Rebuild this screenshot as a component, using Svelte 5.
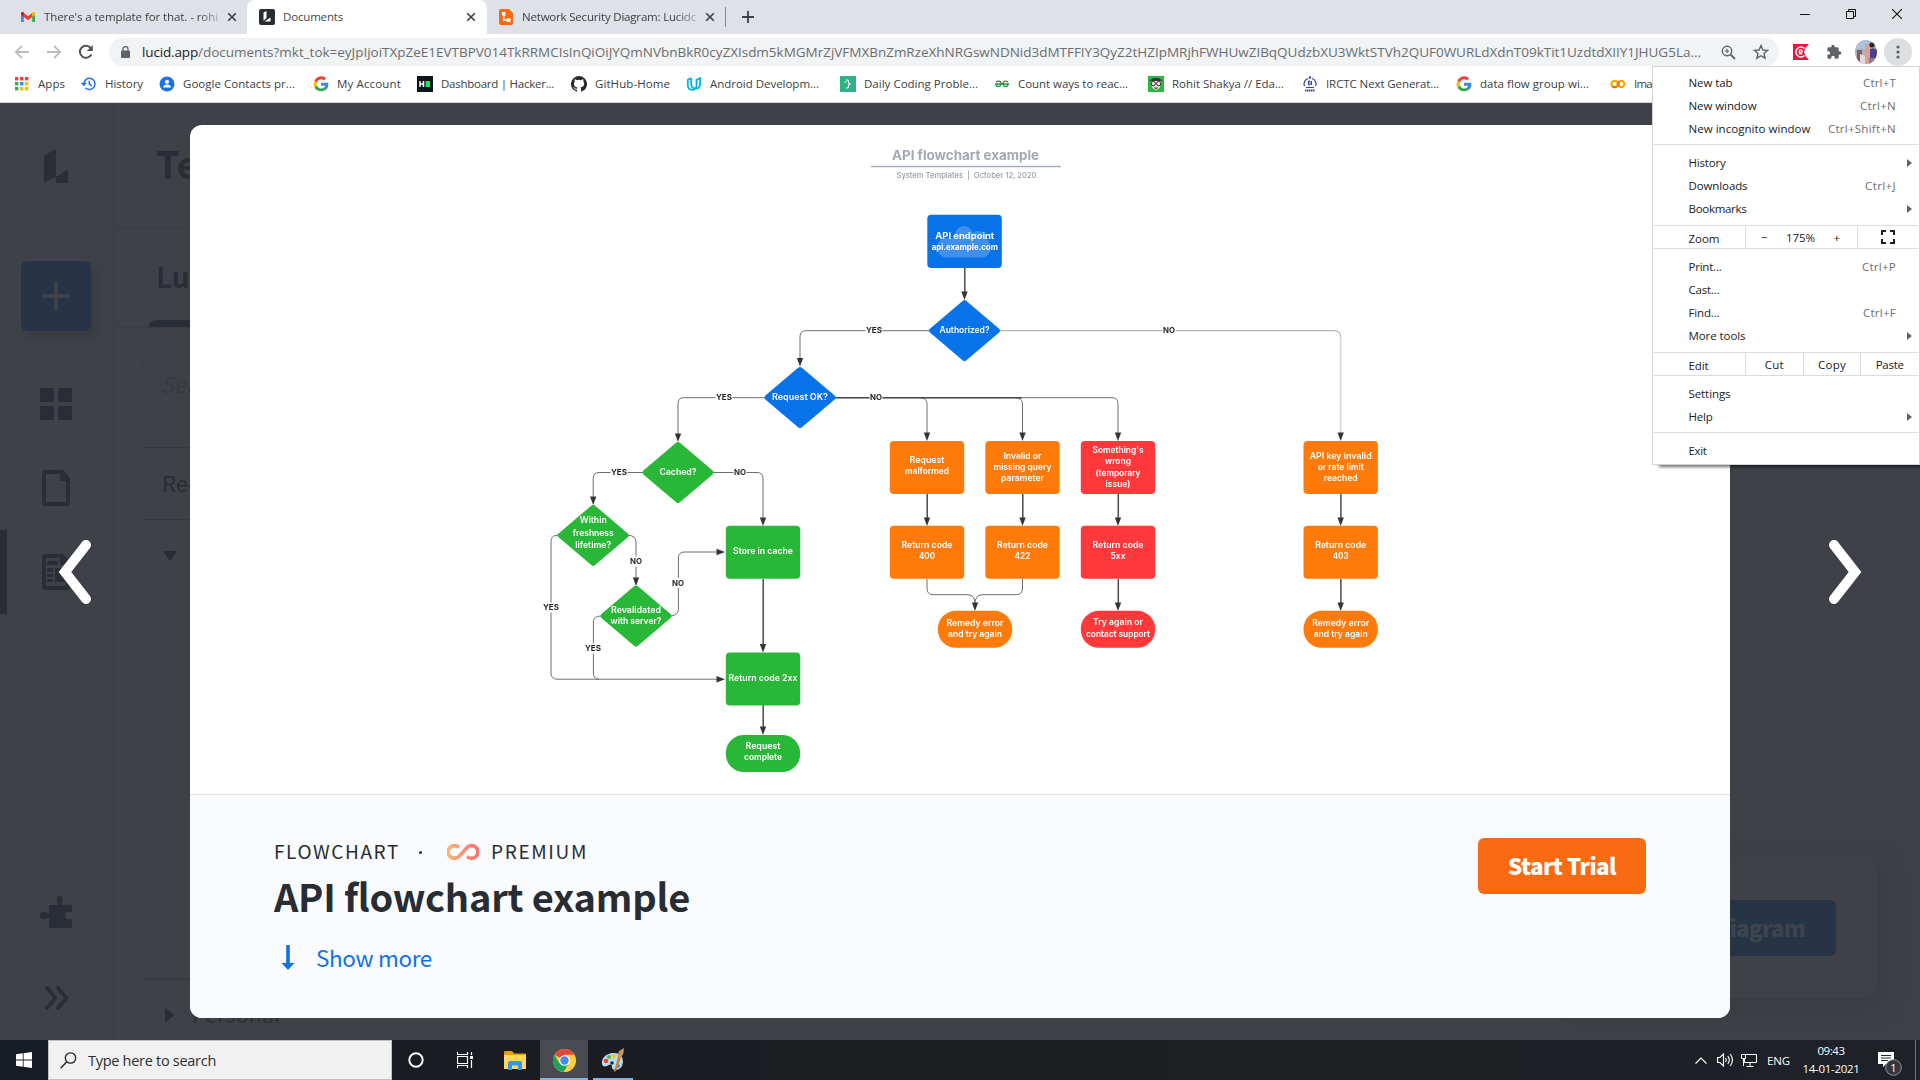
<script>
  // Tracks a text run out (or in) so that it spans the given width.
  function fit(node, width) {
    node.style.letterSpacing = '0px';
    const natural = node.getBoundingClientRect().width;
    const count = node.textContent.length;
    node.style.letterSpacing = `${(width - natural) / count}px`;
  }

  const bookmarks = [
    { icon: 'apps', label: 'Apps', w: 27 },
    { icon: 'history', label: 'History', w: 38 },
    { icon: 'contact', label: 'Google Contacts pr...', w: 112 },
    { icon: 'google', label: 'My Account', w: 64 },
    { icon: 'hacker', label: 'Dashboard | Hacker...', w: 113 },
    { icon: 'github', label: 'GitHub-Home', w: 75 },
    { icon: 'udacity', label: 'Android Developm...', w: 109 },
    { icon: 'daily', label: 'Daily Coding Proble...', w: 114 },
    { icon: 'gfg', label: 'Count ways to reac...', w: 110 },
    { icon: 'face', label: 'Rohit Shakya // Eda...', w: 112 },
    { icon: 'irctc', label: 'IRCTC Next Generat...', w: 113 },
    { icon: 'google', label: 'data flow group wi...', w: 109 },
    { icon: 'colab', label: 'Ima', w: 18 }
  ];

  const BLUE = '#0872e8';
  const GREEN = '#29b737';
  const ORANGE = '#fd7a0b';
  const RED = '#ff393b';

  // Nodes of the flowchart: centre, shape, colour and [text, width, baseline] lines.
  const nodes = [
    { k: 'd', x: 964.5, y: 330.7, c: BLUE, t: [['Authorized?', 50, 333.2]] },
    { k: 'd', x: 800, y: 397.5, c: BLUE, t: [['Request OK?', 56, 400]] },
    { k: 'd', x: 678, y: 472.5, c: GREEN, t: [['Cached?', 37, 475]] },
    { k: 'd', x: 593.2, y: 535.3, c: GREEN, t: [['Within', 27, 523.3], ['freshness', 41, 535.5], ['lifetime?', 36, 547.7]] },
    { k: 'd', x: 636, y: 616, c: GREEN, t: [['Revalidated', 50, 612.5], ['with server?', 51, 623.5]] },
    { k: 'r', x: 763, y: 552.3, c: GREEN, t: [['Store in cache', 60, 554]] },
    { k: 'r', x: 763, y: 679, c: GREEN, t: [['Return code 2xx', 69, 681]] },
    { k: 'p', x: 763, y: 753.5, c: GREEN, t: [['Request', 35, 749], ['complete', 38, 760.3]] },
    { k: 'r', x: 927, y: 467.5, c: ORANGE, t: [['Request', 35, 463], ['malformed', 44, 474]] },
    { k: 'r', x: 1022.5, y: 467.5, c: ORANGE, t: [['Invalid or', 38, 458.7], ['missing query', 58, 470], ['parameter', 43, 481.3]] },
    { k: 'r', x: 1118, y: 467.5, c: RED, t: [["Something's", 51, 452.8], ['wrong', 26, 464.2], ['(temporary', 45, 475.5], ['issue)', 25, 486.7]] },
    { k: 'r', x: 1340.7, y: 467.5, c: ORANGE, t: [['API key invalid', 62, 458.7], ['or rate limit', 46, 470], ['reached', 34, 481.3]] },
    { k: 'r', x: 927, y: 552.3, c: ORANGE, t: [['Return code', 51, 548], ['400', 16, 559.3]] },
    { k: 'r', x: 1022.5, y: 552.3, c: ORANGE, t: [['Return code', 51, 548], ['422', 16, 559.3]] },
    { k: 'r', x: 1118, y: 552.3, c: RED, t: [['Return code', 51, 548], ['5xx', 15, 559.3]] },
    { k: 'r', x: 1340.7, y: 552.3, c: ORANGE, t: [['Return code', 51, 548], ['403', 16, 559.3]] },
    { k: 'p', x: 975, y: 629.3, c: ORANGE, t: [['Remedy error', 57, 626], ['and try again', 54, 637.3]] },
    { k: 'p', x: 1118, y: 629.3, c: RED, t: [['Try again or', 50, 625.3], ['contact support', 64, 636.5]] },
    { k: 'p', x: 1340.7, y: 629.3, c: ORANGE, t: [['Remedy error', 57, 626], ['and try again', 54, 637.3]] }
  ];

  const strong = ['M964.8 268V292', 'M763.2 579V645', 'M763.2 705V728', 'M927.2 494V519', 'M1022.8 494V519', 'M1118.3 494V519', 'M1340.9 494V519', 'M1118.3 579V604', 'M1340.9 579V604'];
  const thin = [
    'M929 330.7H806Q800 330.7 800 336.7V358',
    'M765 397.7H684Q678 397.7 678 403.7V435',
    'M643 472.5H599Q593.2 472.5 593.2 478.5V498',
    'M713 472.5H757Q763 472.5 763 478.5V519',
    'M558 535.3H556Q551 536 551 542V673Q551 679.2 557 679.2H718',
    'M628 535.3Q636 535.5 636 542V578',
    'M601 616Q593.4 616 593.4 622V673Q593.4 679.2 599 679.2',
    'M671 616Q678.4 615 678.4 609V558Q678.4 552 684.4 552H718',
    'M920 397.7Q927 398 927 404V434',
    'M1015 397.7Q1022.5 398 1022.5 404V434',
    'M835 397.7H1112Q1118 397.7 1118 403.7V434',
    'M927 579V588Q927 594.7 933 594.7H968Q975 595 975 604',
    'M1022.5 579V588Q1022.5 594.7 1016.5 594.7H982Q975 595 975 604'
  ];
  const heads = [
    [964.5, 300], [800, 366.5], [678, 442], [593.2, 505], [763, 526], [636, 586], [763, 652.5], [763, 735],
    [927, 441], [1022.5, 441], [1118, 441], [1340.7, 441], [927, 526], [1022.5, 526], [1118, 526], [1340.7, 526],
    [975, 611], [1118, 611], [1340.7, 611]
  ];
  const labels = [
    ['YES', 874, 330], ['NO', 1169, 330], ['YES', 724, 397], ['NO', 876, 397], ['YES', 619, 472], ['NO', 740, 472],
    ['NO', 636, 561.5], ['NO', 678, 583], ['YES', 551, 607.5], ['YES', 593, 648.5]
  ];
</script>

{#snippet google()}
  <svg width="16" height="16" viewBox="0 0 48 48">
    <path fill="#ea4335" d="M24 10c3.500 0 6.600 1.200 9 3.500l6.600-6.600A22 22 0 0 0 4.300 14l7.700 6A12.800 12.800 0 0 1 24 10z" />
    <path fill="#4285f4" d="M46 24.500c0-1.600-.2-3.200-.5-4.500H24v9h12.400a10.600 10.600 0 0 1-4.600 7l7.400 5.700C43.600 37.700 46 31.700 46 24.500z" />
    <path fill="#fbbc05" d="M12 28.500a13.400 13.400 0 0 1 0-8.600l-7.700-6a22 22 0 0 0 0 20.600z" />
    <path fill="#34a853" d="M24 46c6 0 11-2 14.900-5.400L31.800 35A13.400 13.400 0 0 1 12 28.500l-7.700 6A22 22 0 0 0 24 46z" />
  </svg>
{/snippet}

{#snippet bookmarkIcon(name)}
  {#if name === 'google'}
    {@render google()}
  {:else}
    <svg width="16" height="16" viewBox="0 0 16 16">
      {#if name === 'apps'}
        {#each [0, 1, 2, 3, 4, 5, 6, 7, 8] as i}
          <rect x={1 + (i % 3) * 5} y={1 + Math.floor(i / 3) * 5} width="3.400" height="3.400"
            fill={['#ea4335', '#ea4335', '#ea4335', '#34a853', '#4285f4', '#fbbc05', '#34a853', '#fbbc05', '#fbbc05'][i]} />
        {/each}
      {:else if name === 'history'}
        <path d="M2.800 8a5.600 5.600 0 1 1 1.700 4M.6 6.800L2.800 9.200 5.100 6.800M8.300 4.800V8.300L10.800 9.800" fill="none" stroke="#1a73e8" stroke-width="1.500" />
      {:else if name === 'contact'}
        <circle cx="8" cy="8" r="7.500" fill="#1a73e8" /><circle cx="8" cy="5.800" r="2.100" fill="#fff" /><path d="M4 11.500c0-4 8-4 8 0z" fill="#fff" />
      {:else if name === 'hacker'}
        <rect width="16" height="16" fill="#0e141e" /><path d="M3 5v6M6.500 5v6M3 8h4" stroke="#fff" stroke-width="1.500" /><rect x="8.500" y="5" width="4.500" height="6" fill="#05ed57" />
      {:else if name === 'github'}
        <path fill="#24292e" d="M8 0a8 8 0 0 0-2.530 15.590c.4.070.550-.170.550-.380v-1.490c-2.230.490-2.700-.950-2.700-.950-.360-.920-.890-1.170-.890-1.170-.730-.500.050-.490.050-.490.810.060 1.230.830 1.230.830.720 1.230 1.880.870 2.340.670.070-.520.280-.870.510-1.070-1.780-.2-3.640-.890-3.640-3.950 0-.870.310-1.590.820-2.150-.080-.2-.360-1.020.080-2.120 0 0 .670-.210 2.200.820a7.600 7.600 0 0 1 4 0c1.530-1.040 2.200-.820 2.200-.820.440 1.100.160 1.920.080 2.120.510.560.820 1.280.820 2.150 0 3.070-1.870 3.750-3.650 3.950.290.250.540.730.540 1.480v2.190c0 .210.150.460.550.380A8 8 0 0 0 8 0z" />
      {:else if name === 'udacity'}
        <path d="M5.200 2L1.800 3.800V9q0 4.800 4.500 4.800 4.300-.2 4.300-5V3.200M5.200 2V8q.1 4.500 4.600 4.600 4.300 0 4.300-4.800V2L10.600 3.800" fill="none" stroke="#02b3e4" stroke-width="1.800" stroke-linejoin="round" />
      {:else if name === 'daily'}
        <rect width="16" height="16" fill="#2fb282" /><path d="M6 4h1.500q1 0 1 1.500V7l1.500 1-1.500 1v1.500q0 1.500-1 1.500H6" fill="none" stroke="#fff" stroke-width="1.200" /><circle cx="5.500" cy="6" r=".8" fill="#fff" />
      {:else if name === 'gfg'}
        <path d="M1 8h14M2 5.800q4-2 5 1.200 0 3.500-2.700 3.500-2.300 0-2.300-2.500M14 5.800q-4-2-5 1.200 0 3.500 2.700 3.500 2.300 0 2.300-2.500" fill="none" stroke="#2f8d46" stroke-width="1.300" />
      {:else if name === 'face'}
        <rect width="16" height="16" fill="#29b744" /><path d="M2.500 6L5 3h6l2.500 3-2 6L8 14.500 4.500 12z" fill="#f4e9e2" /><path d="M1.500 6q1-4 6.500-4t6.500 4l-2-1H4z" fill="#333" /><circle cx="5.300" cy="7.600" r="2.100" fill="none" stroke="#222" /><circle cx="10.700" cy="7.600" r="2.100" fill="none" stroke="#222" /><path d="M5.500 11.500h5L8 13.500z" fill="#444" />
      {:else if name === 'irctc'}
        <path d="M6 2.500A5.500 5.500 0 0 0 2.500 10M10 2.500A5.500 5.500 0 0 1 13.500 10M4 11.500h8" fill="none" stroke="#33459b" stroke-width="1.200" /><circle cx="8" cy="1.500" r="1.200" fill="#33459b" /><path d="M6.500 5v4h1.500v-4zM9.500 5v4" stroke="#33459b" fill="none" /><path d="M3 14.500h10" stroke="#33459b" stroke-width="2" stroke-dasharray="1.500 .5" />
      {:else}
        <circle cx="4.600" cy="8" r="3.100" fill="none" stroke="#f9ab00" stroke-width="2.200" /><circle cx="11.300" cy="8" r="3.100" fill="none" stroke="#f9ab00" stroke-width="2.200" /><path d="M2.400 10.200a3.100 3.100 0 0 0 4.400 0M9.100 10.200a3.100 3.100 0 0 1 0-4.400" fill="none" stroke="#e8710a" stroke-width="2.200" />
      {/if}
    </svg>
  {/if}
{/snippet}

{#snippet closeIcon()}
  <svg class="close" width="10" height="10" viewBox="0 0 10 10"><path d="M1.200 1.200L8.800 8.800M8.800 1.200L1.200 8.800" stroke="#3c4043" stroke-width="1.600" /></svg>
{/snippet}

{#snippet menuRow(label, keys, width, keyWidth)}
  <div class="row">
    <span use:fit={width}>{label}</span>
    {#if keys === '>'}
      <svg class="sub" width="5" height="8" viewBox="0 0 5 8"><path d="M0 0L5 4 0 8z" fill="#5f6368" /></svg>
    {:else if keys}
      <span class="keys" use:fit={keyWidth}>{keys}</span>
    {/if}
  </div>
{/snippet}

<div class="screen">
  <header>
    <div class="tabs">
      <div class="tab first">
        <svg width="16" height="16" viewBox="0 0 16 16"><path d="M1 3.500V13h2.800V6z" fill="#4285f4" /><path d="M15 3.500V13h-2.800V6z" fill="#34a853" /><path d="M1 4.200V6l2.800 2V4z" fill="#c5221f" /><path d="M15 4.200V6l-2.800 2V4z" fill="#fbbc04" /><path d="M3.800 4L8 7.200 12.200 4v4L8 11.200 3.800 8z" fill="#ea4335" /><circle cx="2.500" cy="4.200" r="1.500" fill="#c5221f" /><circle cx="13.500" cy="4.200" r="1.500" fill="#fbbc04" /></svg>
        <div class="name faded"><span use:fit={174}>There's a template for that. - rohi</span></div>
        {@render closeIcon()}
      </div>
      <div class="tab active">
        <svg width="16" height="16" viewBox="0 0 16 16"><rect width="16" height="16" rx="2" fill="#282c33" /><path d="M4.500 3.500L7.500 2v7L4.500 11.800z" fill="#fff" /><path d="M5.500 12.500L11.500 8.500V12.500z" fill="#fff" /></svg>
        <div class="name"><span use:fit={60}>Documents</span></div>
        {@render closeIcon()}
      </div>
      <div class="tab third">
        <svg width="16" height="16" viewBox="0 0 16 16"><path d="M1 2q0-2 2-2h8l4 4v10q0 2-2 2H3q-2 0-2-2z" fill="#f96b13" /><path d="M4 3h3.500v3.500H4zM9 9.500h3.500V13H9z" fill="#fff" /><path d="M5.800 6v5.300H9" fill="none" stroke="#fff" stroke-width="1.500" /></svg>
        <div class="name faded"><span use:fit={174}>Network Security Diagram: Lucidc</span></div>
        {@render closeIcon()}
      </div>
      <i class="tab-line"></i>
      <svg class="new" width="14" height="14" viewBox="0 0 14 14"><path d="M7 1V13M1 7H13" stroke="#3c4043" stroke-width="1.800" /></svg>
      <div class="window">
        <svg width="10" height="10" viewBox="0 0 10 10"><path d="M0 5.500H10" stroke="#111" /></svg>
        <svg width="10" height="10" viewBox="0 0 10 10"><path d="M.5 2.500h7v7h-7zM2.500 2.500V.5h7v7h-2" fill="none" stroke="#111" /></svg>
        <svg width="10" height="10" viewBox="0 0 10 10"><path d="M0 0L10 10M10 0L0 10" stroke="#111" stroke-width="1.100" /></svg>
      </div>
    </div>

    <div class="toolbar">
      <svg width="16" height="16" viewBox="0 0 16 16"><path d="M15 8H2.500M8 1.800L1.800 8 8 14.200" fill="none" stroke="#babcbe" stroke-width="1.800" /></svg>
      <svg width="16" height="16" viewBox="0 0 16 16"><path d="M1 8H13.500M8 1.800L14.200 8 8 14.200" fill="none" stroke="#babcbe" stroke-width="1.800" /></svg>
      <svg width="16" height="16" viewBox="0 0 16 16"><path d="M13.300 10.500A6 6 0 1 1 12.600 4L14 5.500" fill="none" stroke="#505357" stroke-width="2" /><path d="M14.800 1V7H8.800z" fill="#505357" /></svg>
      <div class="address">
        <svg width="9" height="12" viewBox="0 0 9 12"><rect y="4.500" width="9" height="7.500" rx="1" fill="#5f6368" /><path d="M2 5V3a2.500 2.500 0 0 1 5 0V5" fill="none" stroke="#5f6368" stroke-width="1.300" /></svg>
        <div class="url"><span class="host" use:fit={56}>lucid.app</span><span use:fit={1503}>/documents?mkt_tok=eyJpIjoiTXpZeE1EVTBPV014TkRRMCIsInQiOiJYQmNVbnBkR0cyZXIsdm5kMGMrZjVFMXBnZmRzeXhNRGswNDNid3dMTFFIY3QyZ2tHZIpMRjhFWHUwZIBqQUdzbXU3WktSTVh2QUF0WURLdXdnT09kTit1UzdtdXIIY1JHUG5La...</span></div>
        <svg width="15" height="15" viewBox="0 0 15 15"><circle cx="6" cy="6" r="4.700" fill="none" stroke="#5f6368" stroke-width="1.400" /><path d="M9.500 9.500L14 14" stroke="#5f6368" stroke-width="1.800" /><path d="M6 3.800V8.200M3.800 6H8.200" stroke="#5f6368" stroke-width="1.200" /></svg>
        <svg class="star" width="16" height="16" viewBox="0 0 16 16"><path d="M8 1.500L9.900 6l4.700.4-3.600 3.100 1.100 4.700L8 11.700l-4.100 2.500L5 9.500 1.400 6.400 6.100 6z" fill="none" stroke="#5f6368" stroke-width="1.400" /></svg>
      </div>
      <svg class="ext" width="16" height="16" viewBox="0 0 16 16"><path d="M0 0H16L12.500 4 11 8l1.500 4L16 16H0z" fill="#e9143f" /><path d="M11.500 4.500A5 5 0 1 0 11.500 11.500" fill="none" stroke="#fff" stroke-width="1.500" /><path d="M6.500 10.500V5.800H8a1.300 1.300 0 0 1 0 2.600H6.500L9 10.500" fill="none" stroke="#fff" stroke-width="1.200" /></svg>
      <svg class="puzzle" width="16" height="16" viewBox="0 0 24 24"><path fill="#5f6368" d="M20.500 11H19V7a2 2 0 0 0-2-2h-4V3.500a2.500 2.500 0 0 0-5 0V5H4a2 2 0 0 0-2 2v3.800h1.500a2.700 2.700 0 0 1 0 5.400H2V20a2 2 0 0 0 2 2h3.800v-1.500a2.700 2.700 0 0 1 5.400 0V22H17a2 2 0 0 0 2-2v-4h1.500a2.500 2.500 0 0 0 0-5z" /></svg>
      <svg class="avatar" width="22" height="24" viewBox="0 0 22 24"><clipPath id="av"><ellipse cx="11" cy="12" rx="11" ry="12" /></clipPath><g clip-path="url(#av)"><rect width="22" height="24" fill="#b9aeb4" /><path d="M0 0h13v9H0z" fill="#a7c4dc" /><path d="M10 4h4v20h-4z" fill="#d9a097" /><path d="M2 10h5v14H2z" fill="#6f6672" /><path d="M15 9q4-2 7 1v8h-7z" fill="#4d4288" /><circle cx="17" cy="5" r="2.600" fill="#2a2230" /><path d="M5 14l5 2v8H5z" fill="#e6dad8" /><path d="M14 18h8v6h-8z" fill="#8d7a86" /></g></svg>
      <div class="dots"><svg width="4" height="14" viewBox="0 0 4 14"><circle cx="2" cy="2" r="1.600" fill="#5f6368" /><circle cx="2" cy="7" r="1.600" fill="#5f6368" /><circle cx="2" cy="12" r="1.600" fill="#5f6368" /></svg></div>
    </div>

    <div class="bookmarks">
      {#each bookmarks as b}
        <div class="bookmark" style:width="{b.w > 100 ? 138 : b.w + 24}px">
          {@render bookmarkIcon(b.icon)}
          <span use:fit={b.w}>{b.label}</span>
        </div>
      {/each}
    </div>
  </header>

  <main>
    <nav>
      <div class="cell logo"><svg width="24" height="34" viewBox="0 0 24 34"><path d="M0 6.500L12 0V27.500L0 34zM12 28L24 20.500V34H12z" /></svg></div>
      <div class="cell create"><div class="plus"><svg width="28" height="28" viewBox="0 0 28 28"><path d="M14 2V26M2 14H26" stroke="#3e4147" stroke-width="4" stroke-linecap="round" /></svg></div></div>
      <div class="cell"><svg width="32" height="32" viewBox="0 0 32 32"><rect width="14" height="14" rx="1.500" /><rect x="18" width="14" height="14" rx="1.500" /><rect y="18" width="14" height="14" rx="1.500" /><rect x="18" y="18" width="14" height="14" rx="1.500" /></svg></div>
      <div class="cell"><svg width="28" height="36" viewBox="0 0 28 36"><path fill-rule="evenodd" d="M3 0H21L28 8V33q0 3-3 3H3q-3 0-3-3V3q0-3 3-3zM4 4V32H24V11H18V4z" /></svg></div>
      <div class="cell current"><svg width="28" height="36" viewBox="0 0 28 36"><path fill-rule="evenodd" d="M3 0H21L28 8V33q0 3-3 3H3q-3 0-3-3V3q0-3 3-3zM4 4V32H24V11H18V4z" /><path d="M5 7H16V11H5zM5 14h6v4H5zM5 20h6v3H5zM5 25h6v3H5zM13 14H24V28H13z" /></svg></div>
      <div class="cell plugin"><svg width="32" height="32" viewBox="0 0 32 32"><path d="M11 9h6q1-1-.3-4Q16 0 19.500 0T22.500 5Q21 8 22 9h8q2 0 2 2v5q-7-2-7 3.500T32 23v7q0 2-2 2H11q-2 0-2-2V22q-1-.5-4 1-5 1-5-3.500T5 16q3 1.500 4 .5V11q0-2 2-2z" /></svg></div>
      <div class="cell expand"><svg width="25" height="24" viewBox="0 0 25 24"><path d="M2 2L10.500 12 2 22M13 2L21.500 12 13 22" fill="none" stroke="#292d35" stroke-width="3.600" stroke-linecap="round" stroke-linejoin="round" /></svg></div>
    </nav>
    <section class="page">
      <div class="heading">Templates</div>
      <div class="subheading"><span>Lucidchart</span><i></i></div>
      <div class="search">Search</div>
      <div class="recent">Recent</div>
      <div class="caret"><svg width="14" height="10" viewBox="0 0 14 10"><path d="M0 0H14L7 10z" /></svg></div>
      <div class="personal"><svg width="10" height="14" viewBox="0 0 10 14"><path d="M0 0L10 7 0 14z" /></svg><span use:fit={88}>Personal</span></div>
    </section>
    <aside><div class="ghost-button">Diagram</div></aside>

    <svg class="arrow prev" width="34" height="66" viewBox="0 0 34 66"><path d="M28 6L7 33 28 60" fill="none" stroke="#fff" stroke-width="10" stroke-linecap="round" /></svg>
    <svg class="arrow next" width="34" height="66" viewBox="0 0 34 66"><path d="M6 6L27 33 6 60" fill="none" stroke="#fff" stroke-width="10" stroke-linecap="round" /></svg>

    <article>
      <svg class="diagram" width="1540" height="669" viewBox="190 125 1540 669">
        <text x="892" y="160" class="dtitle" textLength="147" lengthAdjust="spacingAndGlyphs">API flowchart example</text>
        <path d="M871 166.500H1061" stroke="#a4acba" stroke-width="1.500" />
        <text x="896.500" y="177.500" class="dsub" textLength="140" lengthAdjust="spacingAndGlyphs">System Templates  |  October 12, 2020</text>

        {#each thin as d}<path {d} class="thin" />{/each}
        <path d="M1000 330.700H1334Q1340.700 330.700 1340.700 337" class="thin pale" />
        <path d="M1340.700 337V434" class="faint" />
        <path d="M835 397.700H1022" class="strong" />
        {#each strong as d}<path {d} class="strong" />{/each}
        {#each heads as [x, y]}<path d="M{x - 3.2} {y - 8.5}H{x + 3.2}L{x} {y}z" fill="#333639" />{/each}
        <path d="M716.500 548.800V555.200L725 552zM716.500 676V682.400L725 679.200z" fill="#333639" />
        {#each labels as [t, x, y]}
          <rect x={x - (t === 'YES' ? 8.500 : 6.500)} y={y - 5} width={t === 'YES' ? 17 : 13} height="10" fill="#fff" />
          <text {x} y={y + 2.500} class="label" textLength={t === 'YES' ? 16 : 12} lengthAdjust="spacingAndGlyphs">{t}</text>
        {/each}

        <rect x="927.300" y="214.800" width="74.500" height="53.200" rx="4" fill={BLUE} />
        <g fill="#3e8fee"><circle cx="964" cy="235" r="9" /><circle cx="978" cy="241" r="10" /><rect x="937" y="238" width="54" height="19.500" rx="9.700" /></g>
        <text x="964.800" y="238.700" class="bold" textLength="59" lengthAdjust="spacingAndGlyphs">API endpoint</text>
        <text x="964.800" y="249.700" class="bold" textLength="66" lengthAdjust="spacingAndGlyphs">api.example.com</text>

        {#each nodes as n}
          {#if n.k === 'd'}
            <path d="M{n.x - 33} {n.y}L{n.x} {n.y - 28}L{n.x + 33} {n.y}L{n.x} {n.y + 28}z" fill={n.c} stroke={n.c} stroke-width="5" stroke-linejoin="round" />
          {:else}
            <rect x={n.x - 37.200} y={n.y - (n.k === 'r' ? 26.500 : 18.500)} width="74.400" height={n.k === 'r' ? 53 : 37} rx={n.k === 'r' ? 4 : 18} fill={n.c} />
          {/if}
          {#each n.t as [t, w, y]}
            <text x={n.x} {y} class="node" textLength={w} lengthAdjust="spacingAndGlyphs">{t}</text>
          {/each}
        {/each}
      </svg>
      <footer>
        <div class="info">
          <div class="eyebrow">
            <span use:fit={126}>FLOWCHART</span><i class="bullet"></i>
            <svg width="32" height="18" viewBox="0 0 32 18"><defs><linearGradient id="inf"><stop stop-color="#ffb46e" /><stop offset="1" stop-color="#fa7274" /></linearGradient></defs><path d="M12 4.500A6.400 6.400 0 1 0 12 13.500L20 4.500A6.400 6.400 0 1 1 20 13.500" fill="none" stroke="url(#inf)" stroke-width="3.600" /></svg>
            <span use:fit={97}>PREMIUM</span>
          </div>
          <h1><span use:fit={416}>API flowchart example</span></h1>
          <div class="more">
            <svg width="14" height="25" viewBox="0 0 14 25"><path d="M5.200 0H8.800V18H13.500L7 25 .5 18H5.200z" fill="#1071e5" /></svg>
            <span use:fit={116}>Show more</span>
          </div>
        </div>
        <button><span use:fit={108}>Start Trial</span></button>
      </footer>
    </article>
  </main>

  <div class="taskbar">
    <div class="start"><svg width="16" height="16" viewBox="0 0 16 16"><path d="M0 2.300L6.800 1.300V7.600H0zM7.600 1.200L16 0V7.600H7.600zM0 8.400H6.800V14.700L0 13.700zM7.600 8.400H16V16L7.600 14.800z" fill="#fff" /></svg></div>
    <div class="find">
      <svg width="17" height="17" viewBox="0 0 17 17"><circle cx="10.500" cy="6" r="5.200" fill="none" stroke="#222" stroke-width="1.300" /><path d="M6.800 9.800L.6 16.200" stroke="#222" stroke-width="1.400" /></svg>
      <span use:fit={128}>Type here to search</span>
    </div>
    <div class="task"><svg width="16" height="16" viewBox="0 0 16 16"><circle cx="8" cy="8" r="6.700" fill="none" stroke="#fff" stroke-width="1.900" /></svg></div>
    <div class="task wide"><svg width="16" height="16" viewBox="0 0 16 16"><path d="M.5 4.500h10v7H.5zM.5 0V2.500H10.500V0M.5 16V13.500H10.500V16M14.500 0V3M14.500 8V16" fill="none" stroke="#fff" stroke-width="1.200" /><path d="M13 4h3v3h-3z" fill="#fff" /></svg></div>
    <div class="task"><svg width="22" height="19" viewBox="0 0 22 19"><path d="M0 1q0-1 1-1H8l2 2.500H21q1 0 1 1V18H0z" fill="#e3a008" /><path d="M0 4H22V18H0z" fill="#ffd667" /><path d="M4 19V12q0-2 2-2H16q2 0 2 2V19H14V14.500H8V19z" fill="#3a97dd" /></svg></div>
    <div class="task on"><svg width="23" height="23" viewBox="0 0 24 24"><circle cx="12" cy="12" r="12" fill="#ffcd40" /><path d="M12 12L1.600 6A12 12 0 0 1 22.400 6H12z" fill="#de4b3c" /><path d="M1.600 6A12 12 0 0 0 11 24l5.500-9.500L12 12 6.700 14.800z" fill="#1aa260" /><circle cx="12" cy="12" r="5.600" fill="#fff" /><circle cx="12" cy="12" r="4.400" fill="#4a8af4" /></svg><i></i></div>
    <div class="task paint"><svg width="24" height="24" viewBox="0 0 24 24"><path d="M11 5q11-1 11 9-1 8-8 8-4-1-3-4-1-3-5 0Q0 20 1 13 3 6 11 5z" fill="#b3dcf0" /><circle cx="5" cy="13" r="2.300" fill="#e7472f" /><circle cx="8" cy="9" r="2" fill="#5cb531" /><circle cx="13" cy="8" r="2" fill="#f4c416" /><circle cx="17" cy="18" r="1.800" fill="#3b74c9" /><circle cx="11" cy="15" r="1.800" fill="#282b30" /><path d="M13 24L17 9l3 .6L15 23z" fill="#d97a25" /><path d="M16.500 9L18 3l5-3-.5 5-2.500 5z" fill="#c79559" /></svg><i></i></div>
    <div class="tray">
      <svg width="12" height="7" viewBox="0 0 12 7"><path d="M.5 6.500L6 1 11.500 6.500" fill="none" stroke="#fff" stroke-width="1.200" /></svg>
      <svg class="vol" width="17" height="14" viewBox="0 0 17 14"><path d="M.6 4.500H3L6.500 1V13L3 9.500H.6zM8.500 5q1.500 2 0 4M10.800 3.200q3 3.800 0 7.600M13.200 1q4.500 6 0 12" fill="none" stroke="#fff" stroke-width="1.100" /></svg>
      <svg class="net" width="16" height="14" viewBox="0 0 16 14"><path d="M4.500 1.500h11v8H3.500V5.500M.5 1.500h4v4h-4zM2.500 5.500V13M5.500 13.500h7M9 9.500V13" fill="none" stroke="#fff" /></svg>
      <span class="lang" use:fit={23}>ENG</span>
      <div class="clock"><span use:fit={27}>09:43</span><span use:fit={57}>14-01-2021</span></div>
      <div class="notes"><svg width="26" height="26" viewBox="0 0 26 26"><path d="M0 1H16V13H8L5 16V13H0z" fill="#fff" /><path d="M3 4.500H13M3 7H13M3 9.500H10" stroke="#24272c" /><circle cx="15.500" cy="16.500" r="7.800" fill="#33363b" stroke="#909296" /><text x="15.500" y="20.700" class="count">1</text></svg></div>
      <i class="peek"></i>
    </div>
  </div>

  <div class="menu">
    {@render menuRow('New tab', 'Ctrl+T', 44, 33)}
    {@render menuRow('New window', 'Ctrl+N', 68, 36)}
    {@render menuRow('New incognito window', 'Ctrl+Shift+N', 122, 68)}
    <hr />
    {@render menuRow('History', '>', 37)}
    {@render menuRow('Downloads', 'Ctrl+J', 59, 31)}
    {@render menuRow('Bookmarks', '>', 58)}
    <div class="split zoom">
      <span class="first-col"><span use:fit={31}>Zoom</span></span>
      <span class="steps"><b>−</b><span use:fit={29}>175%</span><b>+</b></span>
      <span class="full"><svg width="14" height="14" viewBox="0 0 14 14"><path d="M1 5V1H5M9 1H13V5M13 9V13H9M5 13H1V9" fill="none" stroke="#202124" stroke-width="2" /></svg></span>
    </div>
    {@render menuRow('Print...', 'Ctrl+P', 33, 34)}
    {@render menuRow('Cast...', '', 31)}
    {@render menuRow('Find...', 'Ctrl+F', 31, 33)}
    {@render menuRow('More tools', '>', 57)}
    <div class="split">
      <span class="first-col"><span use:fit={20}>Edit</span></span>
      <span class="third-col"><span use:fit={19}>Cut</span></span>
      <span class="third-col"><span use:fit={28}>Copy</span></span>
      <span class="third-col"><span use:fit={28}>Paste</span></span>
    </div>
    {@render menuRow('Settings', '', 42)}
    {@render menuRow('Help', '>', 24)}
    <hr class="tight" />
    {@render menuRow('Exit', '', 18)}
  </div>
</div>

<style>
  :global(body) { margin: 0; overflow: hidden; }
  .screen { position: relative; width: 1920px; height: 1080px; display: flex; flex-direction: column; overflow: hidden; font-family: "Open Sans", "Noto Sans", sans-serif; font-size: 11.5px; color: #3c4043; }
  svg { display: block; flex: none; }
  span { white-space: nowrap; }
  header { height: 103px; box-sizing: border-box; border-bottom: 1px solid #d5d7da; background: #fff; }
  .tabs { height: 34px; display: flex; align-items: center; background: #dee1e6; }
  .tab { height: 34px; box-sizing: border-box; display: flex; align-items: center; }
  .tab .name { flex: 1; margin-left: 8px; line-height: 20px; }
  .faded { mask-image: linear-gradient(to right, #000 88%, transparent 104%); }
  .close { margin-left: 8px; }
  .first { width: 247px; padding: 0 10px 0 20px; }
  .active { width: 240px; padding: 0 11px 0 12px; background: #fff; border-radius: 8px 8px 0 0; color: #45494d; }
  .third { width: 238px; padding: 0 10px 0 11px; }
  .tab-line { width: 1px; height: 20px; background: #85888c; }
  .new { margin-left: 15px; }
  .window { margin-left: auto; display: flex; gap: 36px; padding: 0 18px 6px 0; }
  .toolbar { height: 36px; display: flex; align-items: center; padding: 0 8px 0 14px; }
  .toolbar > svg { margin-right: 16px; }
  .address { box-sizing: border-box; width: 1672px; height: 28px; border-radius: 14px; background: #f1f3f4; display: flex; align-items: center; padding: 0 10px 0 12px; margin-left: -1px; }
  .url { flex: 1; margin-left: 12px; font-size: 13.5px; color: #6a6e72; display: flex; }
  .host { color: #202124; }
  .star { margin-left: 17px; }
  .toolbar .ext { margin: 0 17px 0 14px; }
  .toolbar .puzzle { margin-right: 13px; }
  .toolbar .avatar { margin-right: 7px; }
  .dots { width: 28px; height: 28px; border-radius: 50%; background: #dedfe1; display: grid; place-items: center; flex: none; }
  .bookmarks { height: 28px; display: flex; gap: 16px; padding-left: 14px; overflow: hidden; }
  .bookmark { flex: none; display: flex; gap: 8px; align-items: center; }
  .bookmark span { padding-bottom: 2px; }

  main { position: relative; height: 937px; display: flex; background: #3e4148; font-family: "Noto Sans CJK SC", "Noto Sans", sans-serif; fill: #292d35; }
  nav { width: 114px; height: 937px; box-sizing: border-box; padding-right: 1px; border-right: 1px solid #393d43; display: flex; flex-direction: column; }
  .cell { height: 84px; display: grid; place-items: center; box-sizing: border-box; }
  .cell.logo { height: 126px; }
  .cell.create { height: 133px; }
  .plus { width: 70px; height: 70px; border-radius: 6px; background: #263446; display: grid; place-items: center; box-shadow: 5px 6px 5px #393c41; }
  .current { border-left: 7px solid #292d35; padding-right: 7px; }
  .cell.plugin { height: 92px; margin-top: auto; padding-top: 7px; border-top: 1px solid #3a3e44; }
  .cell.expand { height: 86px; border-top: 1px solid #3a3e44; padding-left: 2px; }
  .page { width: 500px; color: #292d35; display: flex; flex-direction: column; }
  .heading { height: 125px; padding-left: 42px; font-size: 38px; font-weight: 700; line-height: 120px; border-bottom: 1px solid #393d43; }
  .subheading { height: 98px; padding-left: 42px; position: relative; font-size: 28px; font-weight: 700; line-height: 94px; border-bottom: 1px solid #393d43; }
  .subheading i { position: absolute; left: 35px; bottom: 0; width: 180px; height: 7px; border-radius: 7px 7px 0 0; background: #292d35; }
  .search { margin: 29px 0 0 28px; height: 54px; padding-left: 18px; border: 1px solid #3a3e44; border-radius: 5px; font-size: 22px; font-style: italic; line-height: 50px; color: #353a40; }
  .recent { margin: 34px 0 0 28px; padding-left: 20px; height: 71px; border: solid #34383e; border-width: 1px 0; font-size: 22px; line-height: 69px; }
  .caret { margin: 31px 0 0 49px; }
  .personal { margin: auto 0 0 28px; height: 62px; padding-left: 23px; border-top: 2px solid #383c42; display: flex; align-items: center; gap: 17px; box-sizing: border-box; font-size: 22px; line-height: 60px; color: #2c3137; }
  .personal svg { margin-top: 10px; }
  .personal span { padding-top: 5px; }
  aside { margin: 754px 42px 0 auto; width: 300px; height: 141px; box-sizing: border-box; padding: 43px 42px 0 0; border-radius: 14px; box-shadow: 5px 8px 24px #383b42; display: flex; justify-content: flex-end; }
  .ghost-button { width: 230px; height: 56px; box-sizing: border-box; padding-right: 31px; border-radius: 6px; background: #263446; color: #3e444d; font-size: 22.500px; font-weight: 900; line-height: 54px; letter-spacing: -0.8px; text-align: right; }
  .arrow { position: absolute; top: 436px; }
  .prev { left: 58px; }
  .next { left: 1828px; }

  article { position: absolute; left: 190px; top: 22px; width: 1540px; height: 893px; border-radius: 12px; background: #fff; overflow: hidden; }
  .diagram { filter: blur(0.4px); font-family: Inter, Roboto, sans-serif; }
  .diagram text { text-anchor: middle; font-size: 9px; font-weight: 600; fill: #fff; }
  .diagram .dtitle { text-anchor: start; font-size: 13px; font-weight: 700; fill: #a4a8b2; }
  .diagram .dsub { text-anchor: start; font-size: 8px; font-weight: 500; fill: #979ca8; white-space: pre; }
  .diagram .bold { font-weight: 700; font-size: 8.800px; }
  .diagram .label { font-size: 7.500px; font-weight: 700; fill: #1f2225; }
  .thin { fill: none; stroke: #6c6f72; stroke-width: 1; }
  .pale { stroke: #a0a2a4; }
  .faint { stroke: #dcdddd; stroke-width: 2; }
  .strong { fill: none; stroke: #484b4e; stroke-width: 1.500; }
  footer { height: 224px; box-sizing: border-box; border-top: 1px solid #dfe3e8; background: #fafbfe; padding: 0 84px; display: flex; justify-content: space-between; color: #282c33; }
  .info { padding-top: 41px; }
  .eyebrow { height: 30px; display: flex; align-items: center; font-size: 19px; line-height: 30px; }
  .bullet { width: 3px; height: 3px; margin: 2px 25px 0 19px; border-radius: 50%; background: #282c33; }
  .eyebrow svg { margin-right: 12px; position: relative; top: 1px; }
  h1 { margin: 4px 0 0; height: 52px; font-size: 38px; line-height: 52px; font-weight: 700; }
  .more { margin-top: 19px; height: 32px; padding-left: 7px; display: flex; gap: 21px; font-size: 22.500px; line-height: 32px; color: #1071e5; }
  .more svg { margin-top: 4px; }
  button { margin: 43px 0 0; width: 168px; height: 56px; padding: 0 0 3px; border: 0; border-radius: 6px; background: #f96b13; color: #fff; font: 900 22.500px/50px "Noto Sans CJK SC", "Noto Sans", sans-serif; }

  .taskbar { height: 40px; display: flex; background: linear-gradient(to right, #191d27, #1b1c22 30%, #1d2022 60%, #1e2127); color: #fff; }
  .start { width: 48px; display: grid; place-items: center; }
  .find { width: 344px; height: 40px; box-sizing: border-box; border: 1px solid #bfbfbf; background: #f1f1f1; display: flex; align-items: center; gap: 11px; padding-left: 11px; color: #2e2e2e; font-size: 14.500px; }
  .task { position: relative; width: 48px; margin-right: 1px; display: grid; place-items: center; }
  .task.wide { margin-right: 2px; }
  .task.on { background: #4a4b50; }
  .task i { position: absolute; left: 0; right: 0; bottom: 0; height: 2px; background: #76b9ed; }
  .task.paint i { left: 4px; right: 4px; }
  .tray { margin-left: auto; display: flex; align-items: center; }
  .vol { margin-left: 10px; }
  .net { margin: 0 10px 0 7px; }
  .clock { width: 58px; margin-left: 12px; display: flex; flex-direction: column; align-items: center; line-height: 18px; font-size: 11.500px; }
  .notes { margin: 8px 0 0 18px; }
  .count { fill: #fff; font: 11px "Open Sans", sans-serif; text-anchor: middle; }
  .peek { width: 1px; height: 40px; margin: 0 4px 0 11px; background: #74777b; }

  .menu { position: absolute; left: 1652px; top: 66px; width: 268px; height: 399px; box-sizing: border-box; padding: 4px 1px 0; border: 1px solid #d2d4d8; background: #fff; box-shadow: 6px 3px 3px -1px #00000090; color: #202124; font-size: 11.500px; }
  .row { height: 23px; display: flex; align-items: center; padding: 0 22px 0 34.500px; }
  .keys { margin-left: auto; color: #6a6e73; }
  .sub { margin: 0 -16px 0 auto; }
  hr { height: 0; border: 0; border-top: 1px solid #d9dbdf; margin: 4px 0 6px; }
  .split { display: flex; height: 24px; box-sizing: border-box; border: solid #d9dbdf; border-width: 1px 0; margin: 5px 0 6px; }
  .split + .row { margin-top: 0; }
  .split > span { display: flex; align-items: center; box-sizing: border-box; }
  .split .first-col { width: 92px; padding: 2px 0 0 34.500px; border-right: 1px solid #d9dbdf; }
  .split .steps { width: 112px; padding: 0 17px 0 15px; justify-content: space-between; border-right: 1px solid #d9dbdf; }
  .steps b { font-weight: 400; }
  .full { flex: 1; justify-content: center; }
  .split .third-col { flex: 1; justify-content: center; }
  .third-col + .third-col { border-left: 1px solid #d9dbdf; }
</style>
